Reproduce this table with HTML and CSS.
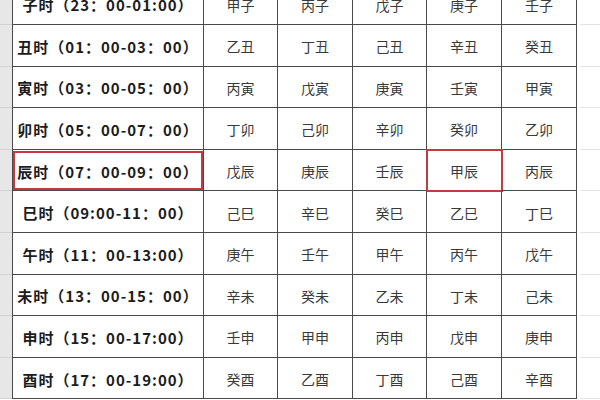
FILE: index.html
```html
<!DOCTYPE html>
<html lang="zh">
<head>
<meta charset="utf-8">
<link rel="stylesheet" href="styles.css">
</head>
<body>
<div class="sheet">
  <div class="row"><div class="g"></div><div class="t">子时（23：00-01:00）</div><div class="c">甲子</div><div class="c">丙子</div><div class="c">戊子</div><div class="c">庚子</div><div class="c">壬子</div><div class="r"></div></div>
  <div class="row"><div class="g"></div><div class="t">丑时（01：00-03：00）</div><div class="c">乙丑</div><div class="c">丁丑</div><div class="c">己丑</div><div class="c">辛丑</div><div class="c">癸丑</div><div class="r"></div></div>
  <div class="row"><div class="g"></div><div class="t">寅时（03：00-05：00）</div><div class="c">丙寅</div><div class="c">戊寅</div><div class="c">庚寅</div><div class="c">壬寅</div><div class="c">甲寅</div><div class="r"></div></div>
  <div class="row"><div class="g"></div><div class="t">卯时（05：00-07：00）</div><div class="c">丁卯</div><div class="c">己卯</div><div class="c">辛卯</div><div class="c">癸卯</div><div class="c">乙卯</div><div class="r"></div></div>
  <div class="row"><div class="g"></div><div class="t sel-a">辰时（07：00-09：00）</div><div class="c">戊辰</div><div class="c">庚辰</div><div class="c">壬辰</div><div class="c sel-b">甲辰</div><div class="c">丙辰</div><div class="r"></div></div>
  <div class="row"><div class="g"></div><div class="t">巳时（09:00-11：00）</div><div class="c">己巳</div><div class="c">辛巳</div><div class="c">癸巳</div><div class="c">乙巳</div><div class="c">丁巳</div><div class="r"></div></div>
  <div class="row"><div class="g"></div><div class="t">午时（11：00-13:00）</div><div class="c">庚午</div><div class="c">壬午</div><div class="c">甲午</div><div class="c">丙午</div><div class="c">戊午</div><div class="r"></div></div>
  <div class="row"><div class="g"></div><div class="t">未时（13：00-15：00）</div><div class="c">辛未</div><div class="c">癸未</div><div class="c">乙未</div><div class="c">丁未</div><div class="c">己未</div><div class="r"></div></div>
  <div class="row"><div class="g"></div><div class="t">申时（15：00-17:00）</div><div class="c">壬申</div><div class="c">甲申</div><div class="c">丙申</div><div class="c">戊申</div><div class="c">庚申</div><div class="r"></div></div>
  <div class="row"><div class="g"></div><div class="t">酉时（17：00-19:00）</div><div class="c">癸酉</div><div class="c">乙酉</div><div class="c">丁酉</div><div class="c">己酉</div><div class="c">辛酉</div><div class="r"></div></div>
</div>
</body>
</html>
```
FILE: styles.css
```css
html, body {
  margin: 0;
  padding: 0;
  background: #ffffff;
  overflow: hidden;
}
body {
  width: 600px;
  height: 400px;
  font-family: "Noto Sans CJK SC", "Noto Sans", sans-serif;
}
.sheet {
  margin-top: -16.6px;
}
.row {
  display: grid;
  grid-template-columns: 12px 192px 74px 75px 74px 75px 75px 1fr;
  height: 41.6px;
}
.g {
  background: #e7e7e7;
  border-bottom: 1px solid #d2d2d2;
}
.t, .c {
  display: flex;
  align-items: center;
  justify-content: center;
  padding-top: 2px;
  box-sizing: border-box;
  border-right: 1px solid #4a4a4a;
  border-bottom: 1px solid #4a4a4a;
  white-space: nowrap;
  overflow: hidden;
}
.t {
  border-left: 1px solid #4a4a4a;
  font-weight: 700;
  font-size: 15px;
  color: #1c1c1c;
  letter-spacing: 1px;
}
.c {
  font-size: 14px;
  color: #3a3a3a;
}
.r {
  margin-left: 3px;
  border-bottom: 1px solid #e4e4e4;
}
.sel-a {
  outline: 2px solid #c8393f;
  outline-offset: -3px;
}
.sel-b {
  outline: 2px solid #c8393f;
  outline-offset: -1px;
}
```
